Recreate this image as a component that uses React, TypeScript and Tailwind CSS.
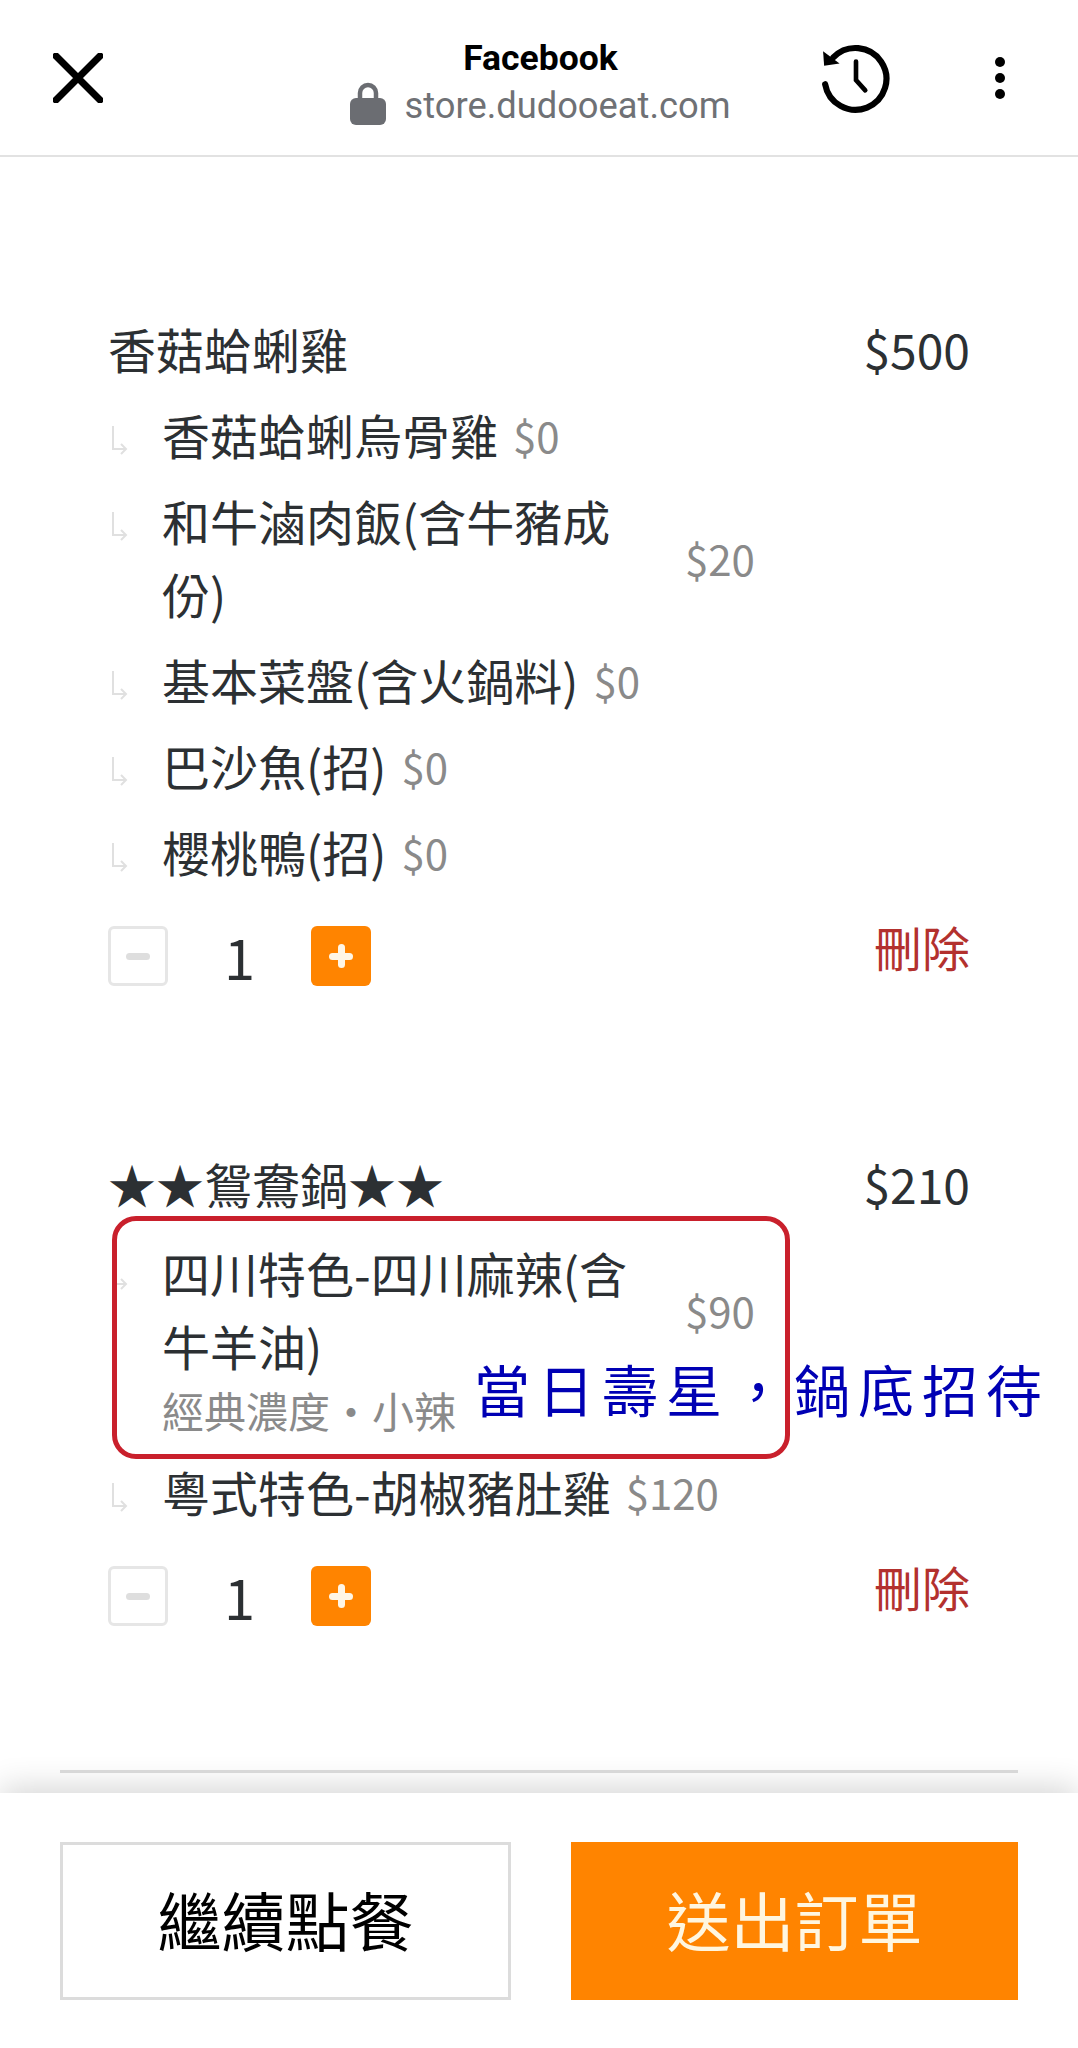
import React from "react";

interface IOption {
  name: string;
  price: number;
  note?: string;
}

interface IItem {
  title: string;
  price: number;
  options: IOption[];
}

const ITEMS: IItem[] = [
  {
    title: "香菇蛤蜊雞",
    price: 500,
    options: [
      { name: "香菇蛤蜊烏骨雞", price: 0 },
      { name: "和牛滷肉飯(含牛豬成份)", price: 20 },
      { name: "基本菜盤(含火鍋料)", price: 0 },
      { name: "巴沙魚(招)", price: 0 },
      { name: "櫻桃鴨(招)", price: 0 },
    ],
  },
  {
    title: "★★鴛鴦鍋★★",
    price: 210,
    options: [
      { name: "四川特色-四川麻辣(含牛羊油)", price: 90, note: "經典濃度・小辣" },
      { name: "粵式特色-胡椒豬肚雞", price: 120 },
    ],
  },
];

function SubArrow() {
  return (
    <svg width="16" height="30" viewBox="0 0 16 30" fill="none" stroke="#e0e0e0" strokeWidth="2" className="absolute left-[4px] top-[28px]">
      <path d="M1 0v23h13M9 18l5 5-5 5" />
    </svg>
  );
}

function OptionRow({ option }: { option: IOption }) {
  return (
    <div className={option.note ? "relative pt-[3px] pl-[54px]" : "relative pl-[54px]"}>
      <SubArrow />
      <div className="flex items-center">
        <div className="max-w-[508px] text-[48px] leading-[73px] text-[#2c3033]">{option.name}</div>
        <div className="ml-[15px] text-[42px] leading-[73px] text-[#8a8a8a]">${option.price}</div>
      </div>
      {option.note && <div className="mt-[3px] mb-[7px] h-[50px] text-[42px] leading-[50px] text-[#8a8a8a]">{option.note}</div>}
    </div>
  );
}

function ItemBlock({ item }: { item: IItem }) {
  return (
    <div className="mb-[161px]">
      <div className="flex items-center justify-between text-[#2c3033]">
        <div className="text-[48px] leading-[73px]">{item.title}</div>
        <div className="text-[48px] leading-[73px]">${item.price}</div>
      </div>
      <div className="mt-[13px] flex flex-col gap-[13px]">
        {item.options.map((o) => (
          <OptionRow key={o.name} option={o} />
        ))}
      </div>
      <div className="mt-[38px] flex items-start justify-between">
        <div className="flex items-center">
          <div className="flex h-[60px] w-[60px] items-center justify-center rounded-[6px] border-[3px] border-[#e6e6e6]">
            <div className="h-[7px] w-[24px] rounded-full bg-[#dedede]" />
          </div>
          <div className="w-[143px] text-center text-[56px] leading-[60px] text-[#2c3033]">1</div>
          <div className="relative flex h-[60px] w-[60px] items-center justify-center rounded-[6px] bg-[#ff8400]">
            <div className="h-[7px] w-[24px] rounded-full bg-[#fff6e6]" />
            <div className="absolute h-[24px] w-[7px] rounded-full bg-[#fff6e6]" />
          </div>
        </div>
        <div className="-mt-[4px] text-[48px] leading-[48px] text-[#b3312e]">刪除</div>
      </div>
    </div>
  );
}

export default function App() {
  return (
    <div className="relative flex h-[2048px] w-[1078px] flex-col overflow-hidden bg-white font-['Noto_Sans_CJK_TC','Noto_Sans',sans-serif]">
      {/* Header */}
      <div className="flex h-[157px] shrink-0 items-center border-b-2 border-[#e2e2e2] font-['Roboto',sans-serif]">
        <svg width="50" height="50" viewBox="0 0 50 50" className="ml-[53px]" fill="none" stroke="#000" strokeWidth="7" strokeLinecap="round">
          <path d="M3 3l44 44M47 3L3 47" />
        </svg>
        <div className="ml-[249px] flex w-[377px] flex-col items-center pt-[8px]">
          <div className="text-[35.5px] leading-[44px] font-bold text-black">Facebook</div>
          <div className="mt-[4px] flex items-center gap-[18px]">
            <svg width="36" height="43" viewBox="0 0 36 43" className="-translate-y-0.5">
              <path d="M10 20v-9a8 8 0 0 1 16 0v9" fill="none" stroke="#6b6d72" strokeWidth="4.5" />
              <rect x="0" y="16" width="36" height="27" rx="6" fill="#6b6d72" />
            </svg>
            <div className="text-[36.3px] leading-[44px] text-[#6f7175]">store.dudooeat.com</div>
          </div>
        </div>
        <svg width="72" height="72" viewBox="0 0 70 70" className="ml-[91px]" fill="none" stroke="#000" strokeWidth="6" strokeLinecap="round">
          <path d="M5 41A30 30 0 1 0 13 15" />
          <path d="M3 9l1 14 15-2z" fill="#000" stroke="none" />
          <path d="M35 19v18l9 10" strokeWidth="4.5" />
        </svg>
        <div className="ml-[103px] flex flex-col gap-[6px]">
          <div className="h-[10px] w-[10px] rounded-full bg-black" />
          <div className="h-[10px] w-[10px] rounded-full bg-black" />
          <div className="h-[10px] w-[10px] rounded-full bg-black" />
        </div>
      </div>

      {/* Order items */}
      <div className="relative min-h-0 flex-1 overflow-hidden px-[108px] pt-[155px]">
        {ITEMS.map((item) => (
          <ItemBlock key={item.title} item={item} />
        ))}
        <div className="absolute bottom-[20px] left-[60px] right-[60px] h-[3px] bg-[#dedede]" />
      </div>

      {/* Footer */}
      <div className="relative flex h-[255px] shrink-0 justify-between bg-white px-[60px] pt-[49px] shadow-[0_-6px_30px_rgba(0,0,0,0.16)]">
        <div className="flex h-[158px] w-[451px] items-center justify-center border-[3px] border-[#dcdcdc] pb-[6px] text-[64px] text-black">繼續點餐</div>
        <div className="flex h-[158px] w-[447px] items-center justify-center bg-[#ff8400] pb-[6px] text-[64px] text-[#fff6e0]">送出訂單</div>
      </div>

      {/* Red annotation box and note drawn on top of the screenshot */}
      <div className="absolute left-[112px] top-[1216px] h-[243px] w-[678px] rounded-[24px] border-[5px] border-[#c9202c]" />
      <div className="absolute left-[474px] top-[1350px] text-[56px] leading-[76px] tracking-[8px] whitespace-nowrap text-[#0000b4]">{"當日壽星\uFF0C鍋底招待"}</div>
    </div>
  );
}
